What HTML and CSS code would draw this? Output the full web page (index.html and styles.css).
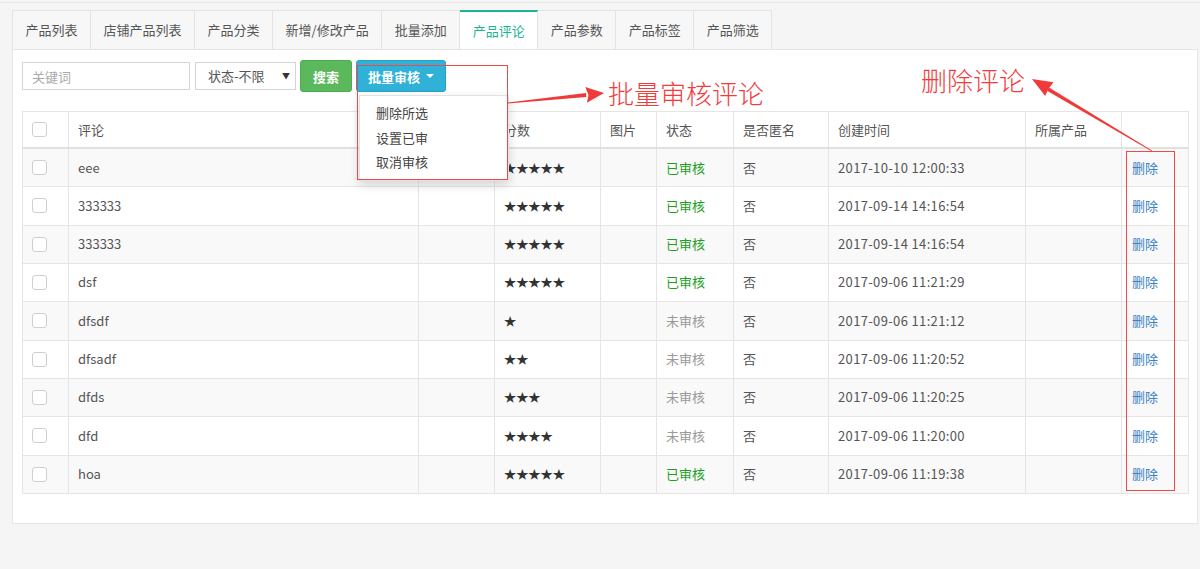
FILE: index.html
```html
<!DOCTYPE html>
<html>
<head>
    <meta charset="utf-8">
    <title>产品评论</title>
    <link rel="stylesheet" href="styles.css">
</head>
<body>
<div class="page">
    <ul class="tabs">
        <li>产品列表</li>
        <li>店铺产品列表</li>
        <li>产品分类</li>
        <li>新增/修改产品</li>
        <li>批量添加</li>
        <li class="active">产品评论</li>
        <li>产品参数</li>
        <li>产品标签</li>
        <li>产品筛选</li>
    </ul>
    <div class="panel">
        <div class="toolbar">
            <input class="keyword" type="text" placeholder="关键词">
            <div class="select">状态-不限<span class="arrow">▼</span></div>
            <button class="btn btn-search">搜索</button>
            <div class="dropdown">
                <button class="btn btn-batch">批量审核<span class="caret"></span></button>
                <ul class="menu">
                    <li>删除所选</li>
                    <li>设置已审</li>
                    <li>取消审核</li>
                </ul>
            </div>
        </div>
        <table class="grid">
            <colgroup>
                <col class="c-check"><col class="c-comment"><col class="c-reply"><col class="c-score">
                <col class="c-pic"><col class="c-state"><col class="c-anon"><col class="c-time">
                <col class="c-product"><col class="c-op">
            </colgroup>
            <thead>
                <tr>
                    <th><span class="check"></span></th>
                    <th>评论</th>
                    <th></th>
                    <th>分数</th>
                    <th>图片</th>
                    <th>状态</th>
                    <th>是否匿名</th>
                    <th>创建时间</th>
                    <th>所属产品</th>
                    <th></th>
                </tr>
            </thead>
            <tbody>
                <tr><td><span class="check"></span></td><td>eee</td><td></td><td class="stars">★★★★★</td><td></td><td class="ok">已审核</td><td>否</td><td class="time">2017-10-10 12:00:33</td><td></td><td><a class="del">删除</a></td></tr>
                <tr><td><span class="check"></span></td><td>333333</td><td></td><td class="stars">★★★★★</td><td></td><td class="ok">已审核</td><td>否</td><td class="time">2017-09-14 14:16:54</td><td></td><td><a class="del">删除</a></td></tr>
                <tr><td><span class="check"></span></td><td>333333</td><td></td><td class="stars">★★★★★</td><td></td><td class="ok">已审核</td><td>否</td><td class="time">2017-09-14 14:16:54</td><td></td><td><a class="del">删除</a></td></tr>
                <tr><td><span class="check"></span></td><td>dsf</td><td></td><td class="stars">★★★★★</td><td></td><td class="ok">已审核</td><td>否</td><td class="time">2017-09-06 11:21:29</td><td></td><td><a class="del">删除</a></td></tr>
                <tr><td><span class="check"></span></td><td>dfsdf</td><td></td><td class="stars">★</td><td></td><td class="wait">未审核</td><td>否</td><td class="time">2017-09-06 11:21:12</td><td></td><td><a class="del">删除</a></td></tr>
                <tr><td><span class="check"></span></td><td>dfsadf</td><td></td><td class="stars">★★</td><td></td><td class="wait">未审核</td><td>否</td><td class="time">2017-09-06 11:20:52</td><td></td><td><a class="del">删除</a></td></tr>
                <tr><td><span class="check"></span></td><td>dfds</td><td></td><td class="stars">★★★</td><td></td><td class="wait">未审核</td><td>否</td><td class="time">2017-09-06 11:20:25</td><td></td><td><a class="del">删除</a></td></tr>
                <tr><td><span class="check"></span></td><td>dfd</td><td></td><td class="stars">★★★★</td><td></td><td class="wait">未审核</td><td>否</td><td class="time">2017-09-06 11:20:00</td><td></td><td><a class="del">删除</a></td></tr>
                <tr><td><span class="check"></span></td><td>hoa</td><td></td><td class="stars">★★★★★</td><td></td><td class="ok">已审核</td><td>否</td><td class="time">2017-09-06 11:19:38</td><td></td><td><a class="del">删除</a></td></tr>
            </tbody>
        </table>
    </div>

    <!-- annotations drawn over the screenshot -->
    <div class="mark mark-batch"></div>
    <div class="mark mark-delete"></div>
    <div class="note note-batch">批量审核评论</div>
    <div class="note note-delete">删除评论</div>
    <svg class="arrows" width="1200" height="569" viewBox="0 0 1200 569">
        <polygon points="507,102.6 586,93 586.4,97 507,103.6" fill="#f03a3a"/>
        <polygon points="604,93 585.3,86.9 588.5,95 586.9,102.8" fill="#f03a3a"/>
        <polygon points="1152,150.5 1049,87.4 1047,90.8 1151.6,151.2" fill="#f03a3a"/>
        <polygon points="1032,79 1053.4,82.3 1048,89.5 1045.2,96.1" fill="#f03a3a"/>
    </svg>
</div>
</body>
</html>
```
FILE: styles.css
```css
body {
    margin: 0;
    background-color: #f5f5f5;
    color: #555;
    font: 13px "Noto Sans CJK SC", "Liberation Sans", sans-serif;
}

.page {
    position: relative;
    height: 566px;
    margin-top: 2px;
    border-top: 1px solid #e9e9e9;
    padding: 7px 2px 0 12px;
    box-sizing: border-box;
}

.tabs {
    display: flex;
    margin: 0;
    padding: 0;
    list-style: none;
}

.tabs li {
    height: 38px;
    line-height: 38px;
    padding: 0 12.5px;
    border: 1px solid #e3e3e3;
    border-bottom: none;
    border-left: none;
    background-color: #f7f7f7;
    color: #555;
}

.tabs li:first-child {
    border-left: 1px solid #e3e3e3;
}

.tabs li.active {
    height: 37px;
    line-height: 37px;
    background-color: #fff;
    border-top: 2px solid #1ab394;
    color: #1ab394;
}

.panel {
    background-color: #fff;
    border: 1px solid #e5e5e5;
    padding: 10px 9px 29px;
}

.toolbar {
    display: flex;
    align-items: center;
    height: 32px;
    margin-bottom: 19px;
}

.keyword {
    width: 168px;
    height: 28px;
    box-sizing: border-box;
    border: 1px solid #d5d5d5;
    padding: 0 9px;
    font: 13px "Noto Sans CJK SC", sans-serif;
    color: #555;
    outline: none;
}

.keyword::placeholder {
    color: #aaa;
}

.select {
    width: 101px;
    height: 28px;
    box-sizing: border-box;
    margin-left: 5px;
    border: 1px solid #d5d5d5;
    padding: 0 0 0 12px;
    line-height: 26px;
    color: #555;
    position: relative;
}

.select .arrow {
    position: absolute;
    right: 5px;
    top: 0;
    font-size: 8px;
    color: #333;
}

.btn {
    height: 32px;
    border: 1px solid transparent;
    border-radius: 3px;
    color: #fff;
    font: bold 13px "Noto Sans CJK SC", sans-serif;
    padding: 0;
    white-space: nowrap;
    cursor: pointer;
}

.btn-search {
    width: 52px;
    margin-left: 4px;
    background-color: #5cb85c;
    border-color: #4cae4c;
}

.dropdown {
    position: relative;
    margin-left: 4px;
}

.btn-batch {
    width: 90px;
    background-color: #2fb1d8;
    border-color: #24a3c9;
    display: flex;
    align-items: center;
    justify-content: center;
}

.caret {
    display: inline-block;
    margin-left: 6px;
    border-top: 4px solid #fff;
    border-left: 4px solid transparent;
    border-right: 4px solid transparent;
}

.menu {
    position: absolute;
    left: 3px;
    top: 35px;
    width: 148px;
    margin: 0;
    padding: 5px 0;
    list-style: none;
    background-color: #fff;
    border: 1px solid #e2e2e2;
    box-shadow: 0 4px 10px rgba(0, 0, 0, 0.15);
    z-index: 2;
}

.menu li {
    padding-left: 16px;
    line-height: 24.5px;
    color: #444;
}

.grid {
    width: 1166px;
    table-layout: fixed;
    border-collapse: collapse;
}

.c-check { width: 46px; }
.c-comment { width: 350px; }
.c-reply { width: 76px; }
.c-score { width: 106px; }
.c-pic { width: 56px; }
.c-state { width: 77px; }
.c-anon { width: 95px; }
.c-time { width: 197px; }
.c-product { width: 96px; }
.c-op { width: 67px; }

.grid th,
.grid td {
    border: 1px solid #e5e5e5;
    padding: 9.5px 9px;
    line-height: 18.33px;
    text-align: left;
    white-space: nowrap;
}

.grid th {
    font-weight: normal;
    padding: 8.5px 9px;
    line-height: 18px;
    border-bottom: 2px solid #e0e0e0;
    color: #555;
}

.grid tbody tr:nth-child(odd) {
    background-color: #f9f9f9;
}

.check {
    display: block;
    width: 15px;
    height: 15px;
    border: 1px solid #cfcfcf;
    border-radius: 3px;
    background-color: #fff;
    box-sizing: border-box;
}

.stars {
    font-family: "Noto Sans CJK SC", sans-serif;
    font-size: 12.2px;
    color: #333;
}

.time {
    letter-spacing: 0.35px;
}

.ok {
    color: #1f9e1f;
}

.wait {
    color: #999;
}

.del {
    color: #3a82c4;
    padding-left: 1px;
}

.mark {
    position: absolute;
    border: 1px solid #f24848;
    z-index: 3;
}

.mark-batch {
    left: 357px;
    top: 62px;
    width: 149px;
    height: 113px;
}

.mark-delete {
    left: 1126px;
    top: 148px;
    width: 47px;
    height: 338px;
}

.note {
    position: absolute;
    color: #f23c3c;
    font: 300 26px "Noto Sans CJK SC", sans-serif;
    line-height: 26px;
}

.note-batch {
    left: 608px;
    top: 77px;
}

.note-delete {
    left: 921px;
    top: 64px;
}

.arrows {
    position: absolute;
    left: 0;
    top: -3px;
    pointer-events: none;
    z-index: 4;
}
```
